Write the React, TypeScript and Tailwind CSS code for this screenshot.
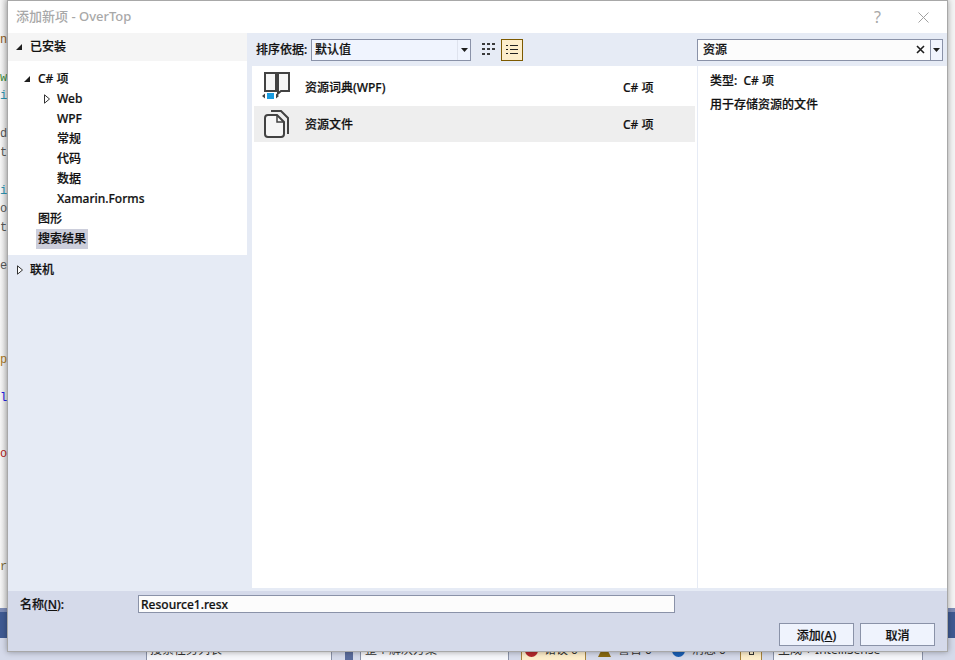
import React from "react";

const font = { fontFamily: '"Noto Sans", "Noto Sans CJK SC", sans-serif' };

const gutter: [string, string][] = [
  ["", ""], ["n", "text-[#8a5a1c]"], ["", ""], ["w", "text-[#3c8a3c]"], ["i", "text-[#2b91af]"], ["", ""],
  ["d", "text-[#555555]"], ["t", "text-[#555555]"], ["", ""], ["i", "text-[#2b91af]"], ["o", "text-[#555555]"], ["t", "text-[#555555]"],
  ["", ""], ["e", "text-[#555555]"], ["", ""], ["", ""], ["", ""], ["", ""], ["p", "text-[#a5761c]"], ["", ""],
  ["l", "text-[#2020e0]"], ["", ""], ["", ""], ["o", "text-[#b02020]"], ["", ""], ["", ""], ["", ""], ["", ""], ["", ""], ["r", "text-[#7a6a3a]"],
];

function TriDown({ className = "" }: { className?: string }) {
  return (
    <svg width="8" height="8" viewBox="0 0 8 8" className={className}>
      <path d="M7 1v6H1z" fill="#1e1e1e" />
    </svg>
  );
}
function TriRight({ className = "" }: { className?: string }) {
  return (
    <svg width="8" height="10" viewBox="0 0 8 10" className={className}>
      <path d="M1.500.8v8.400L6.500 5z" fill="#fff" stroke="#333" />
    </svg>
  );
}
function Caret() {
  return (
    <svg width="7" height="4" viewBox="0 0 7 4">
      <path d="M0 0h7L3.500 4z" fill="#1e1e1e" />
    </svg>
  );
}

function TreeRow({ indent, icon, label, selected }: { indent: string; icon?: React.ReactNode; label: string; selected?: boolean }) {
  return (
    <div className={`flex h-5 items-center ${indent}`}>
      {icon}
      <span className={`px-[2px] leading-5 ${selected ? "bg-[#ccceDB]" : ""}`}>{label}</span>
    </div>
  );
}

function Book() {
  return (
    <svg width="29" height="28" viewBox="0 0 29 28" className="shrink-0">
      <path d="M3 1h11v18H3z" fill="#f6f6f6" stroke="#424242" strokeWidth="2" />
      <path d="M16 1h11v18h-8l-3 2.500z" fill="#f6f6f6" stroke="#424242" strokeWidth="2" />
      <path d="M0 24l3-2.500v5zM17 24l-3-2.500v5z" fill="#424242" />
      <rect x="5" y="21" width="7" height="6" fill="#1a9ce0" />
    </svg>
  );
}
function Doc() {
  return (
    <svg width="25" height="28" viewBox="0 0 25 28" className="shrink-0">
      <path d="M7 1h10l7 7v16" fill="none" stroke="#424242" strokeWidth="2" />
      <path d="M1 8q0-3 3-3h9l7 7v12q0 3-3 3H4q-3 0-3-3z" fill="#f6f6f6" stroke="#424242" strokeWidth="2" />
      <path d="M13 5v7h7" fill="none" stroke="#424242" strokeWidth="1.500" />
    </svg>
  );
}

function GridIcon() {
  return (
    <svg width="14" height="14" viewBox="0 0 14 14">
      <path d="M0 0h3v2H0zM5 0h3v2H5zM10 0h3v2h-3zM0 5h3v2H0zM5 5h3v2H5zM10 5h3v2h-3zM0 10h3v2H0zM5 10h3v2H5z" fill="#3a3a3a" />
    </svg>
  );
}
function ListIcon() {
  return (
    <svg width="14" height="14" viewBox="0 0 14 14">
      <path d="M1 2h2v1H1zM5 2h8v1H5zM1 6h2v1H1zM5 6h8v1H5zM1 10h2v1H1zM5 10h8v1H5z" fill="#222" />
    </svg>
  );
}

function ResultRow({ icon, label, selected, height, pad }: { icon: React.ReactNode; label: string; selected?: boolean; height: string; pad: string }) {
  return (
    <div className={`flex w-[441px] items-center ${height} ${selected ? "bg-[#eeeeee]" : ""}`}>
      <div className="flex w-[44px] shrink-0 justify-center">{icon}</div>
      <span className={`ml-[7px] flex-1 ${pad}`}>{label}</span>
      <span className={`w-[72px] ${pad}`}>C# 项</span>
    </div>
  );
}

function Button({ children }: { children: React.ReactNode }) {
  return (
    <button className="flex h-[23px] w-[75px] items-center justify-center border border-[#8a92a8] bg-[#eff3fd] pt-[2px] text-[12px] text-[#111]">
      {children}
    </button>
  );
}

function StatusIcon({ color }: { color: string }) {
  return (
    <svg width="13" height="13" viewBox="0 0 13 13" className="shrink-0">
      <circle cx="6.500" cy="6.500" r="6.500" fill={color} />
    </svg>
  );
}

export default function App() {
  return (
    <div className="relative flex h-[660px] w-[955px] flex-col overflow-hidden bg-[#f4f4f4]" style={font}>
      <div className="flex h-[608px] shrink-0">
        <div className="w-[8px] overflow-hidden bg-gradient-to-r from-[#f6f6f6] to-[#dcdcdc] pt-[12px] text-[12px] font-medium" style={{ fontFamily: '"Liberation Mono", monospace' }}>
          {gutter.map(([c, cls], i) => (
            <div key={i} className={`h-[18.85px] leading-[18.85px] ${cls}`}>{c}</div>
          ))}
        </div>
        <div className="flex-1" />
      </div>
      <div className="h-[4px] shrink-0 bg-[#7c8bb5]" />
      <div className="h-[26px] shrink-0 bg-[#3f5a92]" />
      <div className="flex h-[22px] shrink-0 items-start overflow-hidden bg-[#d5daea] text-[12px] text-[#333]">
        <div className="ml-[146px] flex h-[24px] w-[186px] shrink-0 items-center justify-between border border-[#8a92a8] bg-[#f6f7fb] pl-[3px] pr-[6px]">
          <span>搜索任务列表</span>
          <Caret />
        </div>
        <div className="ml-[13px] h-[24px] w-[8px] shrink-0 bg-[#5a6c9c]" />
        <div className="ml-[7px] flex h-[24px] w-[149px] shrink-0 items-center justify-between border border-[#8a92a8] bg-[#f6f7fb] pl-[4px] pr-[2px]">
          <span>整个解决方案</span>
          <Caret />
        </div>
        <div className="ml-[12px] flex h-[24px] w-[65px] shrink-0 items-center gap-[6px] border border-[#a8843c] bg-[#fdeecb] pl-[3px]">
          <StatusIcon color="#b5282c" />
          <span className="whitespace-nowrap">错误 0</span>
        </div>
        <div className="ml-[4px] flex h-[24px] w-[70px] shrink-0 items-center gap-[7px] pl-[8px]">
          <svg width="13" height="13" viewBox="0 0 13 13" className="shrink-0">
            <path d="M6.500 0L13 13H0z" fill="#8a6a10" />
          </svg>
          <span className="whitespace-nowrap">警告 0</span>
        </div>
        <div className="ml-[1px] flex h-[24px] w-[79px] shrink-0 items-center gap-[7px] pl-[11px]">
          <StatusIcon color="#1a5fb4" />
          <span className="whitespace-nowrap">消息 0</span>
        </div>
        <div className="flex h-[24px] w-[22px] shrink-0 items-center justify-center border border-[#a8843c] bg-[#fdeecb]">
          <div className="h-[9px] w-[5px] border border-[#333]" />
        </div>
        <div className="ml-[11px] flex h-[24px] w-[150px] shrink-0 items-center justify-between border border-[#8a92a8] bg-[#f6f7fb] pl-[4px] pr-[3px]">
          <span className="whitespace-nowrap">生成 + IntelliSense</span>
          <Caret />
        </div>
      </div>

      {/* Dialog window */}
      <div className="absolute left-[7px] top-0 flex h-[652px] w-[941px] flex-col border border-[#a8a8a8] bg-white text-[12px] font-medium text-[#111] shadow-[0_0_6px_rgba(0,0,0,0.35)] [-webkit-text-stroke:0.2px]">
        <div className="flex h-[32px] shrink-0 items-center justify-between pl-[8px] pr-[18px] [-webkit-text-stroke:0px]">
          <span className="text-[13px] text-[#a8a8a8]">添加新项 - OverTop</span>
          <div className="flex items-center gap-[37px]">
            <span className="text-[16px] font-normal leading-none text-[#a8a8a8]">?</span>
            <svg width="11" height="11" viewBox="0 0 11 11">
              <path d="M.5.500l10 10M10.500.500l-10 10" stroke="#a0a0a0" fill="none" />
            </svg>
          </div>
        </div>

        <div className="flex min-h-0 flex-1 bg-[#e6ebf5]">
          {/* Left tree */}
          <div className="flex w-[244px] shrink-0 flex-col">
            <div className="flex w-[239px] flex-col">
              <div className="flex h-[28px] items-center gap-[7px] bg-[#f5f5f5] pl-[7px]">
                <TriDown />
                <span>已安装</span>
              </div>
              <div className="flex h-[194px] flex-col bg-white pt-[8px]">
                <TreeRow indent="pl-[15px]" icon={<TriDown className="mr-[5px]" />} label="C# 项" />
                <TreeRow indent="pl-[35px]" icon={<TriRight className="mr-[4px]" />} label="Web" />
                <TreeRow indent="pl-[47px]" label="WPF" />
                <TreeRow indent="pl-[47px]" label="常规" />
                <TreeRow indent="pl-[47px]" label="代码" />
                <TreeRow indent="pl-[47px]" label="数据" />
                <TreeRow indent="pl-[47px]" label="Xamarin.Forms" />
                <TreeRow indent="pl-[28px]" label="图形" />
                <TreeRow indent="pl-[28px]" label="搜索结果" selected />
              </div>
              <div className="flex h-[28px] items-center gap-[6px] pl-[8px] pt-[2px]">
                <TriRight />
                <span>联机</span>
              </div>
            </div>
          </div>

          {/* Center + details */}
          <div className="flex min-w-0 flex-1 flex-col">
            <div className="flex h-[33px] shrink-0 items-center bg-[#e6ebf5]">
              <span className="w-[59px] shrink-0 pl-[4px]">排序依据:</span>
              <div className="flex h-[22px] w-[160px] items-center border border-[#8a92a8] bg-[#f0f4fe] pl-[3px]">
                <span className="flex-1">默认值</span>
                <div className="flex h-full w-[13px] items-center justify-center border-l border-[#dfe3ee]">
                  <Caret />
                </div>
              </div>
              <div className="ml-[8px] flex h-[22px] w-[20px] items-center justify-center">
                <GridIcon />
              </div>
              <div className="ml-[2px] flex h-[22px] w-[22px] items-center justify-center border border-[#7d5a00] bg-[#fdeecb]">
                <ListIcon />
              </div>
              <div className="ml-auto mr-[4px] flex h-[22px] w-[246px] items-center border border-[#8a92a8] bg-[#fcfcfc]">
                <span className="flex-1 pl-[5px]">资源</span>
                <svg width="9" height="9" viewBox="0 0 9 9" className="mr-[5px]">
                  <path d="M1 1l7 7M8 1L1 8" stroke="#1e1e1e" strokeWidth="1.600" fill="none" />
                </svg>
                <div className="flex h-full w-[12px] items-center justify-center border-l border-[#8a92a8] bg-[#f0f4fe]">
                  <Caret />
                </div>
              </div>
            </div>

            <div className="flex min-h-0 flex-1 bg-white">
              <div className="w-[445px] shrink-0 pl-[2px]">
                <ResultRow height="h-[40px]" pad="pt-[3px]" icon={<Book />} label="资源词典(WPF)" />
                <ResultRow height="h-[36px]" pad="pt-[2px]" icon={<Doc />} label="资源文件" selected />
              </div>
              <div className="flex-1 border-l border-[#e6ebf5] pl-[12px] pt-[7px]">
                <div className="h-[24px] leading-[16px]">类型:&nbsp; C# 项</div>
                <div className="leading-[16px]">用于存储资源的文件</div>
              </div>
            </div>
          </div>
        </div>

        {/* Bottom */}
        <div className="shrink-0 border-t-[3px] border-[#e6ebf5] bg-[#d5daea]">
          <div className="flex h-[60px] flex-col pl-[12px] pr-[12px] pt-[4px]">
            <div className="flex h-[18px] items-center">
              <span className="w-[118px] shrink-0 pt-[2px]">
                名称(<span className="underline">N</span>):
              </span>
              <div className="flex h-[18px] w-[537px] items-center border border-[#8a92a8] bg-[#fcfcfc] pl-[2px] pt-[2px]">Resource1.resx</div>
            </div>
            <div className="mt-[10px] flex justify-end gap-[6px]">
              <Button>
                添加(<span className="underline">A</span>)
              </Button>
              <Button>取消</Button>
            </div>
          </div>
        </div>
      </div>
    </div>
  );
}
